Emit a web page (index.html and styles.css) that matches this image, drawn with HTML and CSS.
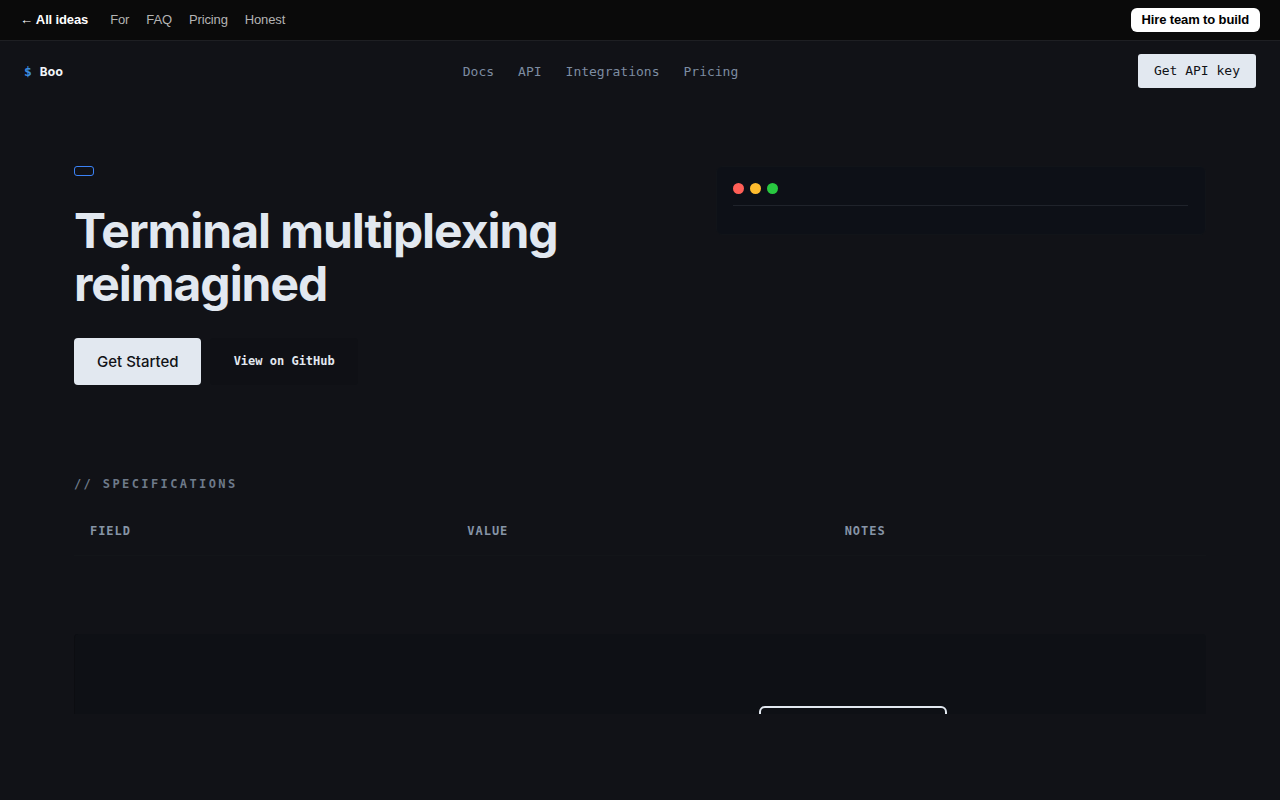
FILE: index.html
```html
<!DOCTYPE html>
<html lang="en">
<head>
  <meta charset="UTF-8">
  <meta name="viewport" content="width=device-width, initial-scale=1.0">
  <title>Boo - Terminal multiplexing reimagined</title>
  <link rel="stylesheet" href="styles.css">
</head>
<body>
  <!-- Barra superior -->
  <div class="topbar">
    <div class="topbar-links">
      <a class="back-link" href="#">← All ideas</a>
      <a href="#">For</a>
      <a href="#">FAQ</a>
      <a href="#">Pricing</a>
      <a href="#">Honest</a>
    </div>
    <a class="hire-btn" href="#">Hire team to build</a>
  </div>

  <!-- Navegação do produto -->
  <nav class="nav">
    <div class="logo"><span class="prompt">$</span> Boo</div>
    <div class="nav-links">
      <a href="#">Docs</a>
      <a href="#">API</a>
      <a href="#">Integrations</a>
      <a href="#">Pricing</a>
    </div>
    <a class="api-btn" href="#">Get API key</a>
  </nav>

  <main class="container">
    <section class="hero">
      <div class="hero-text">
        <span class="badge"></span>
        <h1>Terminal multiplexing reimagined</h1>
        <div class="hero-actions">
          <a class="btn-primary" href="#">Get Started</a>
          <a class="btn-ghost" href="#">View on GitHub</a>
        </div>
      </div>
      <div class="terminal">
        <div class="terminal-head">
          <span class="dot red"></span>
          <span class="dot yellow"></span>
          <span class="dot green"></span>
        </div>
        <div class="terminal-body"></div>
      </div>
    </section>

    <section class="specs">
      <div class="section-label">// SPECIFICATIONS</div>
      <table class="spec-table">
        <thead>
          <tr>
            <th>Field</th>
            <th>Value</th>
            <th>Notes</th>
          </tr>
        </thead>
        <tbody></tbody>
      </table>
    </section>

    <section class="cta">
      <a class="btn-outline" href="#"></a>
    </section>
  </main>
</body>
</html>
```

FILE: styles.css
```css
* {
  box-sizing: border-box;
}

body {
  margin: 0;
  background-color: #111217;
  color: #e2e8f0;
  font-family: Inter, "Liberation Sans", sans-serif;
}

a {
  text-decoration: none;
  color: inherit;
}

/* Barra superior */
.topbar {
  display: flex;
  justify-content: space-between;
  align-items: center;
  height: 41px;
  padding: 0 20px 2px 20px;
  background-color: #0a0a0a;
  border-bottom: 1px solid #1e1f23;
  font-family: "Liberation Sans", Arial, sans-serif;
  font-size: 13px;
}

.topbar-links {
  display: flex;
  gap: 17px;
}

.topbar-links a {
  color: #b4b4b4;
  letter-spacing: -0.01em;
}

.topbar-links .back-link {
  color: #ffffff;
  font-weight: bold;
  margin-right: 5px;
}

.hire-btn {
  background-color: #ffffff;
  color: #000;
  font-weight: bold;
  padding: 5px 11px 5px 11px;
  border-radius: 6px;
  line-height: 14px;
  letter-spacing: -0.01em;
  margin-top: 2px;
}

/* Navegação */
.nav {
  display: flex;
  justify-content: space-between;
  align-items: center;
  padding: 13px 24px 14px 24px;
  font-family: "DejaVu Sans Mono", monospace;
  font-size: 13px;
}

.logo {
  font-weight: bold;
  color: #f1f5f9;
}

.logo .prompt {
  color: #3b8ee0;
}

.nav-links {
  display: flex;
  gap: 24px;
}

.nav-links a {
  color: #7d8ca1;
}

.api-btn {
  background-color: #e2e8f0;
  color: #111217;
  padding: 8px 16px;
  line-height: 18px;
  border-radius: 3px;
}

/* Conteúdo principal */
.container {
  width: 1132px;
  margin: 0 auto;
}

.hero {
  display: grid;
  grid-template-columns: 1fr 490px;
  gap: 64px;
  padding-top: 64px;
  padding-bottom: 91px;
}

.badge {
  display: block;
  width: 20px;
  height: 10px;
  border: 1px solid #3b82f6;
  border-radius: 3px;
}

.hero h1 {
  margin: 29px 0 0 0;
  font-size: 48px;
  line-height: 1.1;
  font-weight: 700;
  letter-spacing: -0.022em;
  color: #e2e8f0;
  max-width: 560px;
}

.hero-actions {
  display: flex;
  gap: 9px;
  margin-top: 27px;
}

.btn-primary {
  background-color: #e2e8f0;
  color: #111217;
  font-size: 15px;
  font-weight: 500;
  line-height: 19px;
  padding: 14px 22px 14px 23px;
  border-radius: 4px;
}

.btn-ghost {
  background-color: #0f1015;
  color: #e2e8f0;
  font-family: "DejaVu Sans Mono", monospace;
  font-size: 12px;
  font-weight: bold;
  line-height: 19px;
  padding: 14px 23px 14px 24px;
  border-radius: 4px;
}

.terminal {
  align-self: start;
  background-color: #0d1017;
  border: 1px solid #111419;
  border-radius: 6px;
  padding: 16px 17px 0 16px;
}

.terminal-head {
  display: flex;
  gap: 6px;
  padding-bottom: 11px;
  border-bottom: 1px solid #1f232b;
}

.dot {
  width: 11px;
  height: 11px;
  border-radius: 50%;
}

.red { background-color: #ff5f57; }
.yellow { background-color: #febc2e; }
.green { background-color: #28c840; }

.terminal-body {
  height: 28px;
}

/* Especificações */
.section-label {
  font-family: "DejaVu Sans Mono", monospace;
  font-size: 12px;
  line-height: 16px;
  letter-spacing: 0.2em;
  color: #6e7a8a;
  font-weight: bold;
}

.spec-table {
  width: 100%;
  margin-top: 15px;
  border-collapse: collapse;
  table-layout: fixed;
}

.spec-table th {
  text-align: left;
  padding: 16px;
  font-family: "DejaVu Sans Mono", monospace;
  font-size: 12px;
  line-height: 16px;
  font-weight: bold;
  letter-spacing: 0.08em;
  text-transform: uppercase;
  color: #8694a6;
  border-bottom: 1px solid #131519;
}

.cta {
  margin-top: 78px;
  height: 80px;
  overflow: hidden;
  background-color: #0e1015;
  border-left: 1px solid #0c0d11;
  border-radius: 4px 4px 0 0;
  padding: 72px 0 0 684px;
}

.btn-outline {
  display: block;
  width: 188px;
  height: 48px;
  border: 2px solid #e2e8f0;
  border-radius: 6px;
}
```
